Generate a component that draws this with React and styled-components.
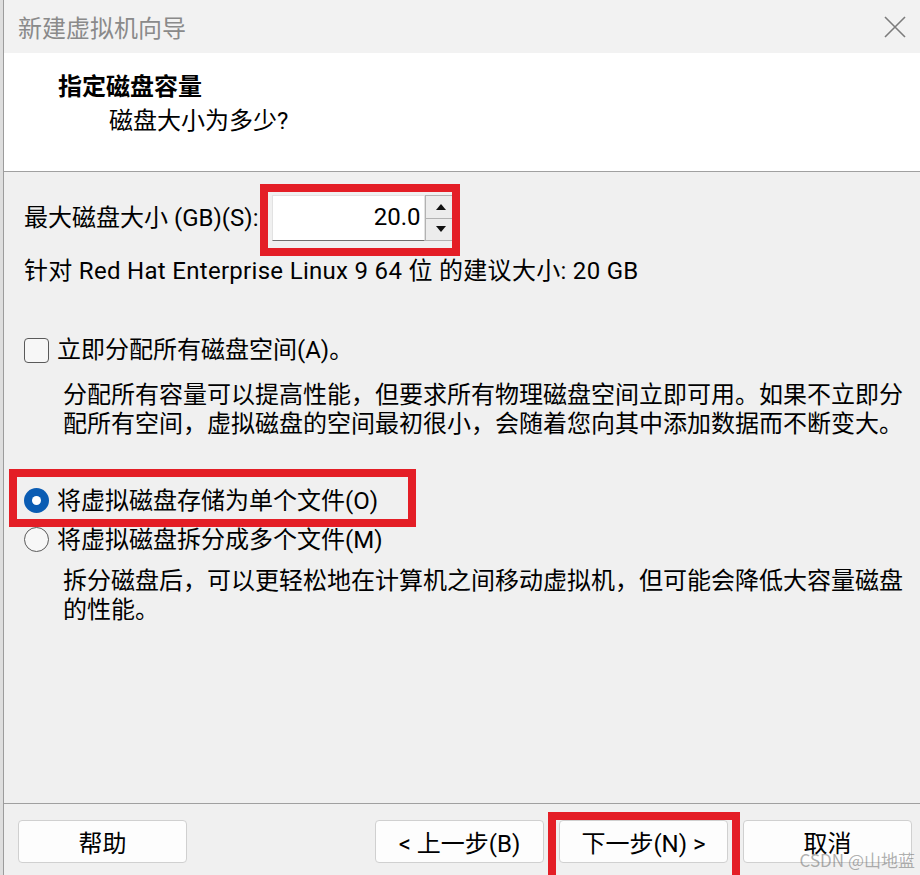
import React from "react";
import styled, { createGlobalStyle } from "styled-components";

const GlobalStyle = createGlobalStyle`
  html, body {
    margin: 0;
    padding: 0;
    background: #dedede;
  }
  body {
    font-family: Roboto, "Noto Sans CJK SC", sans-serif;
    color: #000;
  }
`;

const RED = "#e41e26";

const Window = styled.div`
  position: relative;
  display: flex;
  flex-direction: column;
  height: 875px;
  margin-left: 3px;
  border-left: 1px solid #9c9c9c;
  background: #f0f0f0;
  overflow: hidden;
`;

const TitleBar = styled.div`
  display: flex;
  align-items: center;
  justify-content: space-between;
  height: 53px;
  padding: 0 14px;
  background: #f2f2f2;
  flex-shrink: 0;
`;

const Title = styled.div`
  font-family: "Noto Sans CJK SC", sans-serif;
  font-size: 24px;
  color: #8a8a8a;
  line-height: 30px;
`;

const CloseButton = styled.svg`
  width: 22px;
  height: 22px;
`;

const Header = styled.div`
  background: #fff;
  height: 119px;
  box-sizing: border-box;
  border-bottom: 1px solid #a0a0a0;
  padding: 17px 0 0 54px;
  flex-shrink: 0;
`;

const HeaderTitle = styled.div`
  font-family: "Noto Sans CJK SC", sans-serif;
  font-weight: 700;
  font-size: 24px;
  line-height: 30px;
`;

const HeaderSub = styled.div`
  font-size: 24px;
  line-height: 30px;
  margin: 6px 0 0 51px;
`;

const Body = styled.div`
  flex: 1;
  padding: 23px 0 0 20px;
  font-size: 24px;
`;

const SizeRow = styled.div`
  display: flex;
  align-items: center;
  height: 46px;
`;

const Label = styled.span`
  line-height: 30px;
  white-space: nowrap;
`;

const Annotated = styled.div`
  position: relative;
  display: ${({ $inline }) => ($inline ? "inline-flex" : "flex")};
`;

const Frame = styled.div`
  position: absolute;
  border: 8px solid ${RED};
  top: ${({ $t }) => $t}px;
  right: ${({ $r }) => $r}px;
  bottom: ${({ $b }) => $b}px;
  left: ${({ $l }) => $l}px;
  pointer-events: none;
`;

const Spin = styled.div`
  display: flex;
  margin-left: 14px;
  height: 46px;
`;

const SpinField = styled.div`
  width: 153px;
  box-sizing: border-box;
  background: #fff;
  border: 1px solid #e2e2e2;
  border-bottom: 1px solid #6f6f6f;
  text-align: right;
  padding-right: 4px;
  line-height: 42px;
  font-size: 24px;
`;

const SpinButtons = styled.div`
  display: flex;
  flex-direction: column;
  width: 31px;
`;

const SpinButton = styled.div`
  flex: 1;
  display: flex;
  align-items: center;
  justify-content: center;
  background: #ececec;
  border: 1px solid #b2b2b2;
  & + & {
    border-top: none;
  }
`;

const Arrow = styled.div`
  width: 0;
  height: 0;
  border-left: 5px solid transparent;
  border-right: 5px solid transparent;
  ${({ $down }) =>
    $down ? "border-top: 6px solid #111;" : "border-bottom: 6px solid #111;"}
`;

const Hint = styled.div`
  line-height: 30px;
  margin-top: 15px;
  letter-spacing: 0.3px;
`;

const OptionRow = styled.div`
  display: inline-flex;
  align-items: center;
  gap: 8px;
  height: 30px;
  margin-top: ${({ $mt }) => $mt}px;
`;

const CheckBox = styled.span`
  width: 25px;
  height: 25px;
  box-sizing: border-box;
  border: 1.5px solid #5a5a5a;
  border-radius: 4px;
  background: #f7f7f7;
  flex-shrink: 0;
`;

const Radio = styled.span`
  width: 25px;
  height: 25px;
  box-sizing: border-box;
  border-radius: 50%;
  flex-shrink: 0;
  display: flex;
  align-items: center;
  justify-content: center;
  ${({ $checked }) =>
    $checked
      ? "background: #0a5cb3; border: none;"
      : "background: #f7f7f7; border: 1.5px solid #5a5a5a;"}
  &::after {
    content: "";
    width: 9px;
    height: 9px;
    border-radius: 50%;
    background: #fff;
    display: ${({ $checked }) => ($checked ? "block" : "none")};
  }
`;

const Desc = styled.p`
  margin: ${({ $mt }) => $mt}px 0 0 39px;
  line-height: 29px;
  font-size: 24px;
  white-space: nowrap;
`;

const Block = styled.div`
  display: block;
`;

const Footer = styled.div`
  display: flex;
  justify-content: space-between;
  height: 72px;
  box-sizing: border-box;
  border-top: 1px solid #a0a0a0;
  padding: 16px 8px 0 14px;
  flex-shrink: 0;
`;

const ButtonGroup = styled.div`
  display: flex;
  gap: 15px;
`;

const Button = styled.div`
  width: 169px;
  height: 43px;
  box-sizing: border-box;
  display: flex;
  align-items: center;
  justify-content: center;
  background: #fdfdfd;
  border: 1px solid #d0d0d0;
  border-radius: 4px;
  font-size: 24px;
  white-space: nowrap;
`;

const Watermark = styled.div`
  position: absolute;
  right: 5px;
  bottom: 5px;
  font-family: "Noto Sans CJK SC", sans-serif;
  font-size: 17px;
  line-height: 20px;
  color: rgba(110, 110, 110, 0.55);
  pointer-events: none;
`;

export default function App() {
  return (
    <>
      <GlobalStyle />
      <Window>
        <TitleBar>
          <Title>新建虚拟机向导</Title>
          <CloseButton viewBox="0 0 22 22">
            <path d="M1 1 L21 21 M21 1 L1 21" stroke="#7c7c7c" strokeWidth="1.6" fill="none" />
          </CloseButton>
        </TitleBar>
        <Header>
          <HeaderTitle>指定磁盘容量</HeaderTitle>
          <HeaderSub>磁盘大小为多少?</HeaderSub>
        </Header>
        <Body>
          <SizeRow>
            <Label>最大磁盘大小 (GB)(S):</Label>
            <Annotated>
              <Spin>
                <SpinField>20.0</SpinField>
                <SpinButtons>
                  <SpinButton>
                    <Arrow />
                  </SpinButton>
                  <SpinButton>
                    <Arrow $down />
                  </SpinButton>
                </SpinButtons>
              </Spin>
              <Frame $t={-11} $r={-4} $b={-15} $l={2} />
            </Annotated>
          </SizeRow>
          <Hint>针对 Red Hat Enterprise Linux 9 64 位 的建议大小: 20 GB</Hint>

          <Block>
            <OptionRow $mt={49}>
              <CheckBox />
              <Label>立即分配所有磁盘空间(A)。</Label>
            </OptionRow>
          </Block>
          <Desc $mt={12}>
            分配所有容量可以提高性能，但要求所有物理磁盘空间立即可用。如果不立即分
            <br />
            配所有空间，虚拟磁盘的空间最初很小，会随着您向其中添加数据而不断变大。
          </Desc>

          <Block>
            <Annotated $inline>
              <OptionRow $mt={47}>
                <Radio $checked />
                <Label>将虚拟磁盘存储为单个文件(O)</Label>
              </OptionRow>
              <Frame $t={30} $r={-38} $b={-11} $l={-15} />
            </Annotated>
          </Block>
          <Block>
            <OptionRow $mt={9}>
              <Radio />
              <Label>将虚拟磁盘拆分成多个文件(M)</Label>
            </OptionRow>
          </Block>
          <Desc $mt={9}>
            拆分磁盘后，可以更轻松地在计算机之间移动虚拟机，但可能会降低大容量磁盘
            <br />
            的性能。
          </Desc>
        </Body>
        <Footer>
          <Button>帮助</Button>
          <ButtonGroup>
            <Button>&lt; 上一步(B)</Button>
            <Annotated>
              <Button>下一步(N) &gt;</Button>
              <Frame $t={-8} $r={-12} $b={-12} $l={-11} />
            </Annotated>
            <Button>取消</Button>
          </ButtonGroup>
        </Footer>
        <Watermark>CSDN @山地蓝</Watermark>
      </Window>
    </>
  );
}
